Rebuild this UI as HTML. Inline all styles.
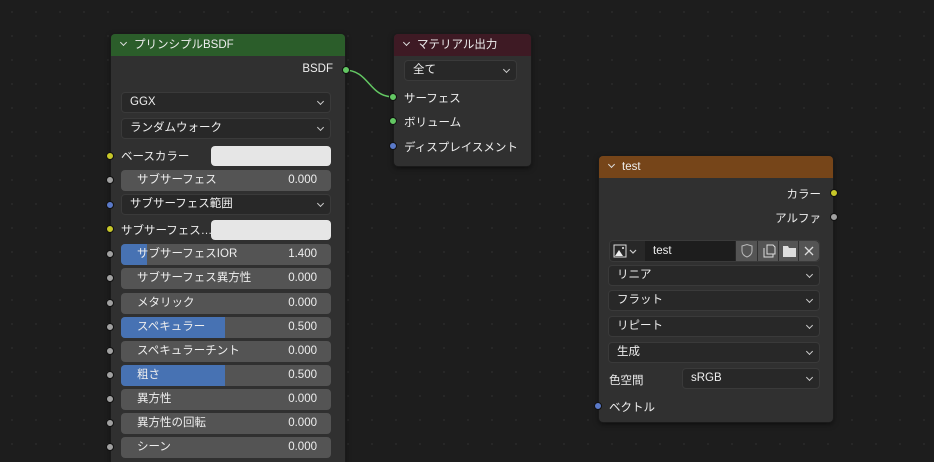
<!DOCTYPE html>
<html style="overflow:hidden;width:934px;height:462px"><head><meta charset="utf-8"><style>
*{box-sizing:border-box;margin:0;padding:0}
body{width:934px;height:462px;overflow:hidden;background:#1d1d1d;background-image:radial-gradient(#2a2a2a 0.8px,transparent 1px);background-size:24px 24px;font-family:"Liberation Sans","Noto Sans CJK JP",sans-serif;font-size:11.5px;color:#eee;position:relative}
.a{position:absolute}
.node{position:absolute;background:#303030;border-radius:4px;box-shadow:0 0 0 1px #1a1a1a,0 2px 6px rgba(0,0,0,.6)}
.hdr{position:absolute;left:0;right:0;top:0;height:22px;border-radius:4px 4px 0 0;padding-left:10px;line-height:22px;font-size:11.5px}
.dd{position:absolute;background:#282828;border:1px solid #3a3a3a;border-radius:4px;height:21px;line-height:19px;padding-left:8px}
.dd:after{content:"";position:absolute;right:7px;top:6px;width:4px;height:4px;border-right:1.3px solid #ccc;border-bottom:1.3px solid #ccc;transform:rotate(45deg)}
.sl{position:absolute;left:10px;width:210px;height:21px;background:#545454;border-radius:4px;overflow:hidden;line-height:21px}
.sl .f{position:absolute;left:0;top:0;bottom:0;background:#4772b3}
.sl .l{position:absolute;left:16px}
.sl .v{position:absolute;right:14px}
.sk{position:absolute;width:8px;height:8px;border-radius:50%;border:1px solid #111}
.g{background:#a1a1a1}.y{background:#c7c729}.b{background:#5a79c8}.gr{background:#63c763}
.col{position:absolute;background:#e6e6e6;border-radius:4px;height:20px}
.chev{display:inline-block;width:5px;height:5px;border-right:1.3px solid #ddd;border-bottom:1.3px solid #ddd;transform:rotate(45deg);margin-right:8px;position:relative;top:-3px}
</style></head><body>
<svg class="a" style="left:0;top:0" width="934" height="462"><path d="M344 70 C370 70,368 97,394 97" stroke="#63c763" stroke-width="1.5" fill="none"/></svg>

<div class="node" style="left:111px;top:34px;width:234px;height:440px">
<div class="hdr" style="background:#2b5d2a"><span class="chev"></span>プリンシプルBSDF</div>
<div class="a" style="right:12px;top:29px">BSDF</div>
<div class="sk gr" style="right:-5px;top:32px"></div>
<div class="dd" style="left:10px;top:58px;width:210px">GGX</div>
<div class="dd" style="left:10px;top:84px;width:210px">ランダムウォーク</div>
<div class="sk y" style="left:-5px;top:118px"></div><div class="a" style="left:10px;top:114px">ベースカラー</div><div class="col" style="left:100px;top:112px;width:120px"></div>
<div class="sk g" style="left:-5px;top:142px"></div><div class="sl" style="top:136px"><span class="l">サブサーフェス</span><span class="v">0.000</span></div>
<div class="sk b" style="left:-5px;top:167px"></div><div class="dd" style="left:10px;top:160px;width:210px">サブサーフェス範囲</div>
<div class="sk y" style="left:-5px;top:191px"></div><div class="a" style="left:10px;top:188px">サブサーフェス…</div><div class="col" style="left:100px;top:186px;width:120px"></div>
<div class="sk g" style="left:-5px;top:216px"></div><div class="sl" style="top:210px"><div class="f" style="width:26px"></div><span class="l">サブサーフェスIOR</span><span class="v">1.400</span></div>
<div class="sk g" style="left:-5px;top:240px"></div><div class="sl" style="top:234px"><span class="l">サブサーフェス異方性</span><span class="v">0.000</span></div>
<div class="sk g" style="left:-5px;top:265px"></div><div class="sl" style="top:259px"><span class="l">メタリック</span><span class="v">0.000</span></div>
<div class="sk g" style="left:-5px;top:289px"></div><div class="sl" style="top:283px"><div class="f" style="width:104px"></div><span class="l">スペキュラー</span><span class="v">0.500</span></div>
<div class="sk g" style="left:-5px;top:313px"></div><div class="sl" style="top:307px"><span class="l">スペキュラーチント</span><span class="v">0.000</span></div>
<div class="sk g" style="left:-5px;top:337px"></div><div class="sl" style="top:331px"><div class="f" style="width:104px"></div><span class="l">粗さ</span><span class="v">0.500</span></div>
<div class="sk g" style="left:-5px;top:361px"></div><div class="sl" style="top:355px"><span class="l">異方性</span><span class="v">0.000</span></div>
<div class="sk g" style="left:-5px;top:385px"></div><div class="sl" style="top:379px"><span class="l">異方性の回転</span><span class="v">0.000</span></div>
<div class="sk g" style="left:-5px;top:409px"></div><div class="sl" style="top:403px"><span class="l">シーン</span><span class="v">0.000</span></div>
</div>

<div class="node" style="left:394px;top:34px;width:137px;height:132px">
<div class="hdr" style="background:#3e1a24"><span class="chev"></span>マテリアル出力</div>
<div class="dd" style="left:10px;top:26px;width:113px">全て</div>
<div class="sk gr" style="left:-5px;top:59px"></div><div class="a" style="left:10px;top:56px">サーフェス</div>
<div class="sk gr" style="left:-5px;top:83px"></div><div class="a" style="left:10px;top:80px">ボリューム</div>
<div class="sk b" style="left:-5px;top:108px"></div><div class="a" style="left:10px;top:105px">ディスプレイスメント</div>
</div>

<div class="node" style="left:599px;top:156px;width:234px;height:266px">
<div class="hdr" style="background:#764519"><span class="chev"></span>test</div>
<div class="a" style="right:12px;top:30px">カラー</div><div class="sk y" style="right:-5px;top:33px"></div>
<div class="a" style="right:12px;top:54px">アルファ</div><div class="sk g" style="right:-5px;top:57px"></div>
<div class="a" style="left:10px;top:84px;width:211px;height:22px;background:#282828;border:1px solid #3a3a3a;border-radius:4px"></div>
<svg class="a" style="left:14px;top:88px" width="30" height="14"><rect x="1" y="1" width="12" height="12" fill="none" stroke="#ddd"/><path d="M2 12 L6 6 L10 12Z" fill="#eee"/><circle cx="10" cy="4" r="1" fill="#eee"/><path d="M17 6 L20 9 L23 6" stroke="#ccc" fill="none" stroke-width="1.2"/></svg>
<div class="a" style="left:46px;top:85px;width:90px;height:20px;background:#1d1d1d;padding-left:8px;line-height:20px">test</div>
<div class="a" style="left:137px;top:85px;width:83px;height:20px;background:#545454;border-radius:0 4px 4px 0"></div>
<div class="a" style="left:158px;top:85px;width:1px;height:20px;background:#303030"></div>
<div class="a" style="left:179px;top:85px;width:1px;height:20px;background:#303030"></div>
<div class="a" style="left:199px;top:85px;width:1px;height:20px;background:#303030"></div>
<svg class="a" style="left:140px;top:87px" width="80" height="16"><path d="M3 3 L8 1.5 L13 3 L13 8 Q13 12 8 14 Q3 12 3 8Z" fill="none" stroke="#bbb"/><path d="M25 5 L25 14 L34 14 L34 6 L31 3 L28 3" fill="none" stroke="#ddd"/><path d="M28 2 L28 11 L36 11 L36 4 L34 2Z" fill="#545454" stroke="#ddd"/><path d="M44 3 L49 3 L50 5 L57 5 L57 14 L44 14Z" fill="#ddd"/><path d="M66 4 L74 12 M74 4 L66 12" stroke="#ddd" stroke-width="1.3"/></svg>
<div class="dd" style="left:9px;top:109px;width:212px">リニア</div>
<div class="dd" style="left:9px;top:134px;width:212px">フラット</div>
<div class="dd" style="left:9px;top:160px;width:212px">リピート</div>
<div class="dd" style="left:9px;top:186px;width:212px">生成</div>
<div class="a" style="left:10px;top:216px">色空間</div>
<div class="dd" style="left:83px;top:212px;width:138px">sRGB</div>
<div class="sk b" style="left:-5px;top:246px"></div><div class="a" style="left:10px;top:243px">ベクトル</div>
</div>
</body></html>
